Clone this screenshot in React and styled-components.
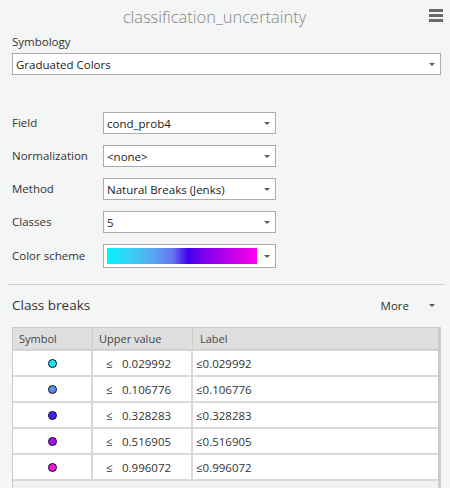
import React from "react";
import styled, { createGlobalStyle } from "styled-components";

const Global = createGlobalStyle`
  html, body { margin: 0; padding: 0; background: #f4f5f5; }
  body { font-family: "Open Sans", "Noto Sans", sans-serif; color: #333; }
  * { box-sizing: border-box; }
`;

const Panel = styled.div`
  width: 450px;
  height: 488px;
  overflow: hidden;
  background: #f4f5f5;
  display: flex;
  flex-direction: column;
`;

const Header = styled.div`
  height: 34px;
  display: flex;
  align-items: center;
  padding-right: 7px;
`;

const Title = styled.div`
  flex: 1;
  text-align: center;
  font-size: 16.5px;
  font-weight: 300;
  color: #878787;
  padding-bottom: 1px;
`;

const Hamburger = styled.div`
  width: 14px;
  display: flex;
  flex-direction: column;
  gap: 2px;
  margin-bottom: 3px;
  span {
    display: block;
    height: 3px;
    background: #6a6a6a;
  }
`;

const Label = styled.div`
  font-size: 11.5px;
  color: #333;
  line-height: 16px;
`;

const SymbologyBlock = styled.div`
  padding: 0 9px 0 12px;
  display: flex;
  flex-direction: column;
  gap: 3px;
`;

const Select = styled.div`
  height: ${(p) => p.$h || 22}px;
  border: 1px solid #ababab;
  background: #fff;
  display: flex;
  align-items: center;
  padding: 0 5px 0 3px;
  font-size: 11.5px;
  color: #222;
`;

const SelectText = styled.span`
  flex: 1;
  white-space: nowrap;
`;

const Caret = styled.span`
  width: 0;
  height: 0;
  border-left: 3px solid transparent;
  border-right: 3px solid transparent;
  border-top: 3px solid #5a5a5a;
  margin-left: 4px;
`;

const Form = styled.div`
  margin-top: 37px;
  padding-left: 12px;
  display: grid;
  grid-template-columns: 91px 173px;
  row-gap: 11px;
  align-items: center;
`;

const Ramp = styled.div`
  flex: 1;
  height: 16px;
  margin: 0 3px 0 0;
  background: linear-gradient(
    to right,
    #00f2ff 0%,
    #30d8f6 12%,
    #58aaf2 30%,
    #6a72ec 44%,
    #4300f2 54%,
    #8400ec 66%,
    #c000e8 82%,
    #ff00ee 100%
  );
`;

const Separator = styled.div`
  margin: 16px 5px 0 8px;
  height: 1px;
  background: #cfcfcf;
`;

const SectionHead = styled.div`
  display: flex;
  align-items: center;
  height: 42px;
  padding: 0 15px 0 12px;
`;

const SectionTitle = styled.div`
  flex: 1;
  font-size: 13.5px;
  color: #333;
  padding-bottom: 2px;
`;

const More = styled.div`
  font-size: 11.5px;
  color: #333;
  display: flex;
  align-items: center;
  gap: 16px;
  padding-bottom: 2px;
`;

const Table = styled.div`
  margin: 0 9px 0 12px;
  border: 1px solid #cbcbcb;
  border-right-width: 3px;
  border-bottom: none;
  background: #d9d9d9;
  flex: 1;
  display: flex;
  flex-direction: column;
`;

const HeadRow = styled.div`
  display: grid;
  grid-template-columns: 79px 100px 1fr;
  height: 22px;
  background: #dfdfdf;
  border-bottom: 1px solid #cdcdcd;
`;

const HeadCell = styled.div`
  font-size: 11px;
  color: #444;
  display: flex;
  align-items: center;
  padding-left: ${(p) => p.$pad || 6}px;
  border-left: ${(p) => (p.$first ? "none" : "1px solid #cfcfcf")};
`;

const Body = styled.div`
  display: grid;
  grid-template-columns: 78px 98px 1fr;
  grid-auto-rows: 24px;
  gap: 2px;
  padding-top: 1px;
`;

const Cell = styled.div`
  background: #fff;
  display: flex;
  align-items: center;
  justify-content: ${(p) => (p.$center ? "center" : "flex-start")};
  font-size: 11.5px;
  color: #333;
  padding-left: ${(p) => p.$pad || 0}px;
`;

const Dot = styled.span`
  width: 9px;
  height: 9px;
  border-radius: 50%;
  border: 1px solid #111;
  background: ${(p) => p.$color};
`;

const Le = styled.span`
  width: 16px;
`;

const Filler = styled.div`
  flex: 1;
  margin-top: 2px;
  background: #f1f1f1;
`;

const rows = [
  ["#1ee6f2", "0.029992"],
  ["#5c8ef2", "0.106776"],
  ["#4d1ef0", "0.328283"],
  ["#a414ef", "0.516905"],
  ["#f014e4", "0.996072"],
];

export default function App() {
  return (
    <Panel>
      <Global />
      <Header>
        <Title>classification_uncertainty</Title>
        <Hamburger>
          <span />
          <span />
          <span />
        </Hamburger>
      </Header>
      <SymbologyBlock>
        <Label>Symbology</Label>
        <Select>
          <SelectText>Graduated Colors</SelectText>
          <Caret />
        </Select>
      </SymbologyBlock>
      <Form>
        <Label>Field</Label>
        <Select>
          <SelectText>cond_prob4</SelectText>
          <Caret />
        </Select>
        <Label>Normalization</Label>
        <Select>
          <SelectText>&lt;none&gt;</SelectText>
          <Caret />
        </Select>
        <Label>Method</Label>
        <Select>
          <SelectText>Natural Breaks (Jenks)</SelectText>
          <Caret />
        </Select>
        <Label>Classes</Label>
        <Select>
          <SelectText>5</SelectText>
          <Caret />
        </Select>
        <Label>Color scheme</Label>
        <Select $h={24}>
          <Ramp />
          <Caret />
        </Select>
      </Form>
      <Separator />
      <SectionHead>
        <SectionTitle>Class breaks</SectionTitle>
        <More>
          More
          <Caret />
        </More>
      </SectionHead>
      <Table>
        <HeadRow>
          <HeadCell $first $pad={6}>Symbol</HeadCell>
          <HeadCell $pad={6}>Upper value</HeadCell>
          <HeadCell $pad={7}>Label</HeadCell>
        </HeadRow>
        <Body>
          {rows.map(([c, v]) => (
            <React.Fragment key={v}>
              <Cell $center>
                <Dot $color={c} />
              </Cell>
              <Cell $pad={13}>
                <Le>≤</Le>
                {v}
              </Cell>
              <Cell $pad={3}>≤{v}</Cell>
            </React.Fragment>
          ))}
        </Body>
        <Filler />
      </Table>
    </Panel>
  );
}
